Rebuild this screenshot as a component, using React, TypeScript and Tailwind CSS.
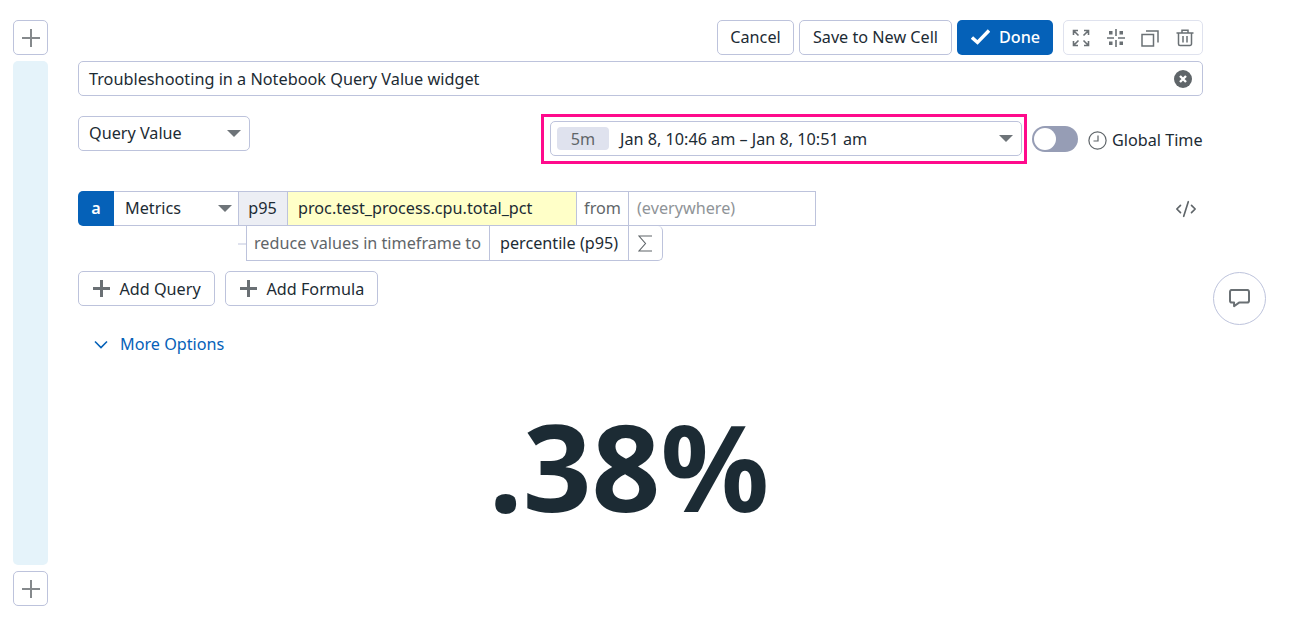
import { CodeXml } from "lucide-react";

const border = "border border-[#bdc3dc]";

function Caret() {
  return <span className="h-0 w-0 border-x-[7px] border-t-[7px] border-x-transparent border-t-[#6e7479]" />;
}

function PlusIcon({ size, weight, color }: { size: number; weight: number; color: string }) {
  return (
    <svg width={size} height={size} viewBox={`0 0 ${size} ${size}`} fill={color}>
      <rect x={(size - weight) / 2} y="0" width={weight} height={size} />
      <rect x="0" y={(size - weight) / 2} width={size} height={weight} />
    </svg>
  );
}

function PlusBox() {
  return (
    <button className={`${border} flex h-[35px] w-[35px] items-center justify-center rounded-[5px] bg-white`}>
      <PlusIcon size={18} weight={2} color="#85898c" />
    </button>
  );
}

function AddButton({ label, width }: { label: string; width: string }) {
  return (
    <button className={`${border} ${width} flex h-[35px] items-center gap-[9.5px] rounded-[5px] bg-white pl-[14px] text-[16.2px] text-[#1c2b34]`}>
      <PlusIcon size={17} weight={3} color="#6a7074" />
      <span className="pt-[1px]">{label}</span>
    </button>
  );
}

function FocusIcon() {
  return (
    <svg width="18" height="18" viewBox="0 0 18 18" fill="none" stroke="#6a7074" strokeWidth="1.6">
      <path d="M9 0v7M9 11v7M0 9h7M11 9h7" />
      <path d="M2 2h3.500v3.500H2zM12.500 2H16v3.500h-3.500zM2 12.500h3.500V16H2zM12.500 12.500H16V16h-3.500z" fill="#6a7074" stroke="none" />
    </svg>
  );
}

function ExpandIcon() {
  return (
    <svg width="18" height="18" viewBox="0 0 18 18" fill="none" stroke="#6a7074" strokeWidth="1.6">
      <path d="M1.5 6V1.5H6M1.5 1.5l5 5M12 1.5h4.5V6M16.5 1.5l-5 5M1.5 12v4.5H6M1.5 16.5l5-5M16.5 12v4.5H12M16.5 16.5l-5-5" />
    </svg>
  );
}

function CopyIcon() {
  return (
    <svg width="18" height="18" viewBox="0 0 18 18" fill="none" stroke="#6a7074" strokeWidth="1.5">
      <path d="M1 5.500h11.500V17H1z" />
      <path d="M5 2h12v11.500" />
    </svg>
  );
}

function TrashIcon() {
  return (
    <svg width="18" height="18" viewBox="0 0 18 18" fill="none" stroke="#6a7074" strokeWidth="1.5">
      <path d="M0.500 4h17M6 4V1.200h6V4M2.500 4v11a1.500 1.500 0 0 0 1.500 1.500h10a1.500 1.500 0 0 0 1.500-1.500V4M7 7v6.500M11 7v6.500" />
    </svg>
  );
}

function ClockIcon() {
  return (
    <svg width="19" height="19" viewBox="0 0 19 19" fill="none" stroke="#5f6569" strokeWidth="1.2">
      <circle cx="9.500" cy="9.500" r="8.600" />
      <path d="M10 4.500v5.500H5.500" />
    </svg>
  );
}

function SigmaIcon() {
  return (
    <svg width="15" height="17" viewBox="0 0 15 17" fill="none" stroke="#5f6569" strokeWidth="1.1">
      <path d="M14 1H1l6.500 7.500L1 16h13" />
    </svg>
  );
}

function ClearIcon() {
  return (
    <svg width="18" height="18" viewBox="0 0 18 18">
      <circle cx="9" cy="9" r="9" fill="#5f6569" />
      <path d="M6 6l6 6M12 6l-6 6" stroke="#fff" strokeWidth="2.400" />
    </svg>
  );
}

function CommentIcon() {
  return (
    <svg width="21" height="19" viewBox="0 0 23 21" fill="none" stroke="#6a7074" strokeWidth="2.200" strokeLinejoin="round">
      <path d="M3 1h17a2 2 0 0 1 2 2v10a2 2 0 0 1-2 2H11l-5.500 4v-4H3a2 2 0 0 1-2-2V3a2 2 0 0 1 2-2z" />
    </svg>
  );
}

export default function App() {
  return (
    <div className="relative flex h-[618px] w-[1289px] gap-[30px] overflow-hidden bg-white pl-[13px] pt-[20px] font-['Noto_Sans',sans-serif] text-[#1c2b34]">
      {/* Cell gutter */}
      <div className="flex h-[586px] w-[35px] flex-col gap-[6px]">
        <PlusBox />
        <div className="flex-1 rounded-[5px] bg-[#e5f3fa]" />
        <PlusBox />
      </div>

      {/* Editor */}
      <div className="w-[1125px]">
        <div className="flex h-[35px] items-center justify-end">
          <button className={`${border} h-[35px] w-[77px] rounded-[5px] pb-[1px] text-[16.2px]`}>Cancel</button>
          <button className={`${border} ml-[5px] h-[35px] w-[153px] rounded-[5px] pb-[1px] text-[16.2px]`}>Save to New Cell</button>
          <button className="ml-[5px] flex h-[35px] w-[96px] items-center gap-[9px] rounded-[5px] bg-[#0561b8] pb-[1px] pl-[14px] text-[16.2px] font-medium text-white">
            <svg width="19" height="16" viewBox="0 0 19 16" fill="none" stroke="#fff" strokeWidth="3.400">
              <path d="M1 8.500l5.500 5L18 1.500" />
            </svg>
            Done
          </button>
          <div className="ml-[10px] flex h-[35px] w-[140px] items-center justify-between rounded-[5px] border border-[#dfe2ee] px-[8px]">
            <ExpandIcon />
            <FocusIcon />
            <CopyIcon />
            <TrashIcon />
          </div>
        </div>

        <div className={`${border} mt-[6px] flex h-[35px] items-center justify-between rounded-[5px] px-[10px] text-[16.25px]`}>
          <span className="pt-[1px]">Troubleshooting in a Notebook Query Value widget</span>
          <ClearIcon />
        </div>

        <div className="mt-[18px] flex items-start">
          <div className={`${border} mt-[2px] flex h-[35px] w-[172px] items-center justify-between rounded-[5px] pb-[1px] pl-[10px] pr-[8px] text-[16.2px]`}>
            Query Value
            <Caret />
          </div>
          <div className="ml-[291px] h-[50px] w-[486px] border-[3px] border-[#ff0a8c] pb-[4px] pl-[6px] pr-[2px] pt-[4px]">
            <div className={`${border} flex h-[35px] items-center rounded-[5px] pl-[6px] pr-[8px] text-[16.2px]`}>
              <span className="flex h-[23px] w-[52px] items-center justify-center rounded-[4px] bg-[#dfe2ee] pt-[1px] text-[#5f6569]">5m</span>
              <span className="ml-[11px] flex-1 pt-[1px]">Jan 8, 10:46 am – Jan 8, 10:51 am</span>
              <Caret />
            </div>
          </div>
          <div className="ml-[5px] mt-[12px] flex h-[26px] w-[46px] items-center rounded-full bg-[#969db5] pl-[2px]">
            <span className="h-[22px] w-[22px] rounded-full bg-white" />
          </div>
          <div className="ml-[10px] mt-[14px] flex h-[24px] items-center gap-[5px] text-[16.2px] whitespace-nowrap">
            <ClockIcon />
            Global Time
          </div>
        </div>

        {/* Query */}
        <div className="mt-[27px] flex h-[35px] items-stretch text-[16.2px]">
          <span className="flex w-[36px] items-center justify-center rounded-l-[5px] bg-[#0561b8] pb-[1px] font-semibold text-white">a</span>
          <span className="flex w-[124px] items-center justify-between border-y border-[#bdc3dc] pb-[1px] pl-[11px] pr-[6px]">
            Metrics
            <Caret />
          </span>
          <span className={`${border} flex w-[50px] items-center justify-center bg-[#eceef4] pb-[1px] pr-[1px]`}>p95</span>
          <span className="flex w-[288px] items-center border-y border-[#bdc3dc] bg-[#ffffc8] pb-[1px] pl-[10px]">proc.test_process.cpu.total_pct</span>
          <span className={`${border} flex w-[53px] items-center justify-center pb-[1px] text-[#5f6569]`}>from</span>
          <span className="flex w-[187px] items-center border-y border-r border-[#bdc3dc] pl-[8px] text-[#8f9498]">(everywhere)</span>
          <CodeXml size={22} strokeWidth={1.8} className="ml-auto mr-[6px] self-center text-[#5f6569]" />
        </div>
        <div className="flex h-[35px] items-center text-[16.2px]">
          <span className="ml-[160px] h-[2px] w-[8px] bg-[#dfe2ee]" />
          <span className={`${border} flex h-[35px] w-[244px] items-center border-t-0 pl-[7px] text-[#5f6569]`}>reduce values in timeframe to</span>
          <span className="flex h-[35px] w-[138px] items-center border-b border-[#bdc3dc] pl-[10px]">percentile (p95)</span>
          <span className={`${border} flex h-[35px] w-[35px] items-center justify-center rounded-br-[5px] rounded-tr-[5px] border-t-0`}>
            <SigmaIcon />
          </span>
        </div>

        <div className="mt-[10px] flex gap-[10px]">
          <AddButton label="Add Query" width="w-[137px]" />
          <AddButton label="Add Formula" width="w-[153px]" />
        </div>

        <div className="mt-[26px] flex h-[24px] items-center gap-[12px] pl-[16px] text-[16.2px] text-[#0561b8]">
          <svg width="14" height="9" viewBox="0 0 14 9" fill="none" stroke="#0561b8" strokeWidth="1.600">
            <path d="M1 1.500l6 6 6-6" />
          </svg>
          More Options
        </div>

        <div className="mt-[24px] w-[1102px] text-center text-[120.5px] font-bold leading-[170px] text-[#1c2b34]">.38%</div>
      </div>

      {/* Floating feedback button */}
      <button className={`${border} absolute left-[1213px] top-[272px] flex h-[53px] w-[53px] items-center justify-center rounded-full bg-white`}>
        <CommentIcon />
      </button>
    </div>
  );
}
